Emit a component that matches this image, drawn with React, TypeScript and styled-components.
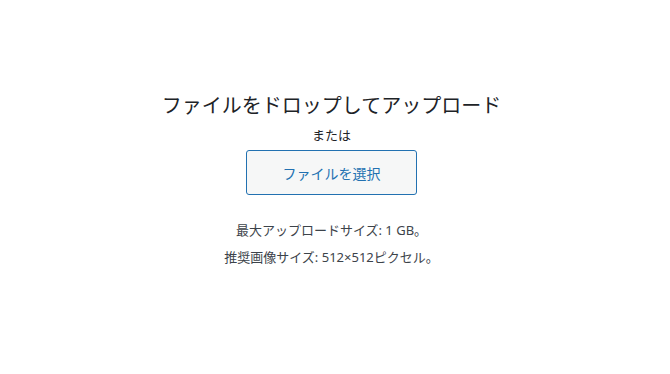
import React from "react";
import styled, { createGlobalStyle } from "styled-components";

const Global = createGlobalStyle`
  html, body { margin: 0; padding: 0; background: #fff; }
  body { font-family: "Noto Sans", "Noto Sans CJK JP", sans-serif; color: #3c434a; }
`;

const Page = styled.div`
  width: 670px;
  height: 374px;
  display: flex;
  flex-direction: column;
  align-items: center;
  padding: 92px 7px 0 0;
  box-sizing: border-box;
`;

const Title = styled.h2`
  margin: 0;
  font-size: 20px;
  line-height: 28px;
  font-weight: 400;
  color: #1d2327;
`;

const Or = styled.p`
  margin: 5px 0 0;
  font-size: 13px;
  line-height: 20px;
  color: #1d2327;
`;

const SelectButton = styled.button`
  margin-top: 5px;
  width: 171px;
  height: 45px;
  box-sizing: border-box;
  border: 1px solid #2271b1;
  border-radius: 3px;
  background: #f6f7f7;
  color: #2271b1;
  font-family: inherit;
  font-size: 14px;
  cursor: pointer;
`;

const Info = styled.p<{ $gap: number }>`
  margin: ${(p) => p.$gap}px 0 0;
  font-size: 13px;
  line-height: 20px;
  color: #3c434a;
`;

export default function App() {
  return (
    <>
      <Global />
      <Page>
        <Title>ファイルをドロップしてアップロード</Title>
        <Or>または</Or>
        <SelectButton>ファイルを選択</SelectButton>
        <Info $gap={25}>最大アップロードサイズ: 1 GB。</Info>
        <Info $gap={7}>推奨画像サイズ: 512×512ピクセル。</Info>
      </Page>
    </>
  );
}
